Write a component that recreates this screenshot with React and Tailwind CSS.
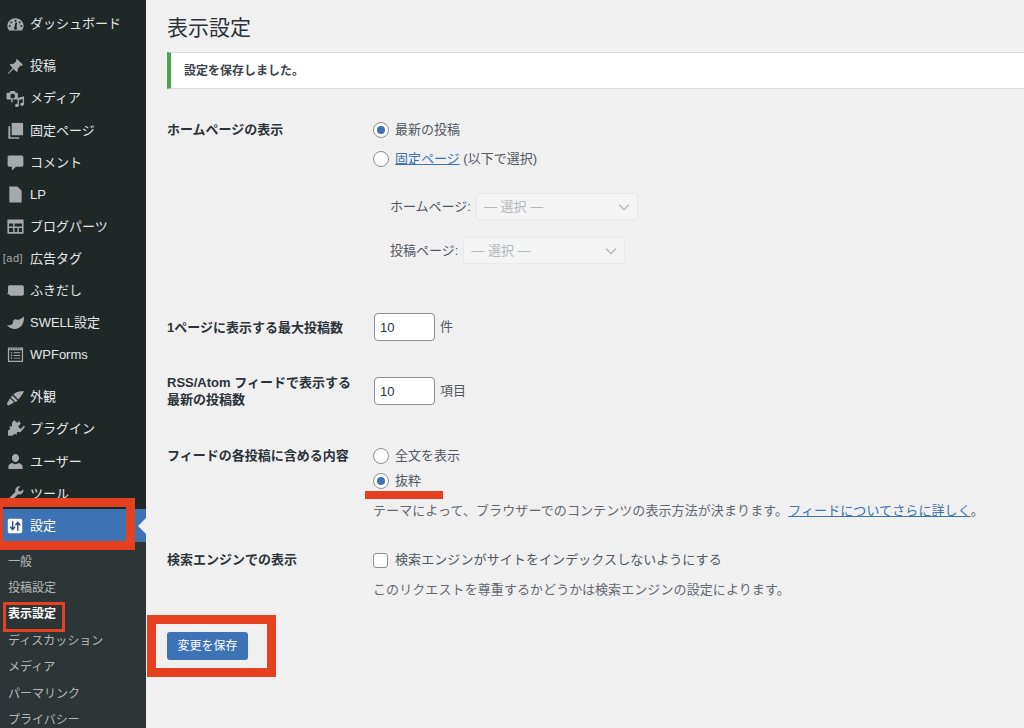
import React from 'react';

const gray = '#a7aaad';

// Menu icons, drawn on a 20x20 box like the admin's icon font
const icons = {
  dashboard: (
    <path fillRule="evenodd" d="M10 3.500C5.300 3.500 1.500 7 1.500 11.300c0 1.800.6 3.500 1.700 4.900h13.600c1.100-1.400 1.700-3.100 1.700-4.900C18.500 7 14.700 3.500 10 3.500zM10 5a1 1 0 110 2 1 1 0 010-2zM5.600 6.800a1 1 0 110 2 1 1 0 010-2zm8.800 0a1 1 0 110 2 1 1 0 010-2zM3.900 10.600a1 1 0 110 2 1 1 0 010-2zm12.200 0a1 1 0 110 2 1 1 0 010-2zM11.700 8l-.7 4.600a1.600 1.600 0 11-2 0L9.900 8h1.800z" />
  ),
  pin: (
    <path d="M11.600 2.200l6.200 6-1.300 1.200-1-.5-3.200 3.100c.5 1.500.2 3-.8 4.100L8 12.600l-5.600 5.200-.6-.5L7 11.600 3.700 8.200c1.100-1 2.700-1.300 4.100-.8l3.100-3.200-.5-1 1.200-1z" />
  ),
  media: (
    <path fillRule="evenodd" d="M1.500 4h2.300l1-1.800h4.400l1 1.800h1.300c.6 0 1 .4 1 1v5c0 .6-.4 1-1 1H7v3H5.500v-3h-4c-.6 0-1-.4-1-1V5c0-.6.4-1 1-1zM7 5a2.500 2.500 0 100 5 2.500 2.500 0 000-5zM19 7.500v8.300c0 1.100-1 2-2.100 2s-1.900-.7-1.900-1.700 1-1.700 2-1.700c.2 0 .4 0 .6.100V10.500l-4 1v5.600c0 1.100-1 1.900-2.100 1.900s-1.900-.7-1.900-1.700.9-1.700 2-1.700c.2 0 .4 0 .6.100V9.500L19 7.500z" />
  ),
  pages: (
    <>
      <path d="M6 2h12v13H6z" />
      <path d="M2.500 5.500H4.500V17H14v1.800H2.500z" />
    </>
  ),
  comment: (
    <path d="M3.500 2.500h13c1 0 1.800.8 1.800 1.800v8.400c0 1-.8 1.800-1.800 1.800h-6l-4.300 4v-4H3.500c-1 0-1.800-.8-1.800-1.800V4.300c0-1 .8-1.800 1.800-1.800z" />
  ),
  file: <path d="M3.500 1.500h8.500l4.500 4.500v12.500h-13z" />,
  table: (
    <path fillRule="evenodd" d="M1.500 2.500h17v15h-17v-15zm1.700 4.300v3.200h4.300V6.800H3.200zm5.800 0v3.200h7.800V6.800H9zm-5.800 4.700v4.300h4.300v-4.300H3.200zm5.800 0v4.300h3v-4.300H9zm4.500 0v4.300h3.300v-4.300h-3.300z" />
  ),
  bubble: (
    <path d="M3.500 4.500h13.500c1 0 1.800.8 1.800 1.800v7.400c0 1-.8 1.800-1.800 1.800H4.500l-1-1.400-2.400-.6 1-1.200V6.300c0-1 .8-1.800 1.400-1.800z" />
  ),
  swell: (
    <path d="M18.800 3.800c.6 5.500-1.600 11.500-7.600 12.800C7 17.500 3 15.700.8 12.400c2.200.9 4.200.7 5.400-.3.900-.8 1-2.100 1.100-3 .3-2 2.200-3 3.600-2.300 1.100.5 2.100.4 3.600-.3 1.700-.7 3.100-1.500 4.300-2.700z" />
  ),
  forms: (
    <path fillRule="evenodd" d="M2 2.500h16V18H2V2.500zm1.300 3v11.200h13.400V5.500H3.300zM4 3.400v1h1v-1H4zm2.500 0v1h1v-1h-1zm2.500 0v1h1v-1H9zm2.500 0v1h1v-1h-1zm2.500 0v1h1v-1h-1zM5 7.500h1.500V9H5V7.500zm3 .2h7v1H8v-1zm-3 2.600h1.500v1.500H5v-1.500zm3 .2h7v1H8v-1zm-3 2.600h1.500v1.500H5V13.100zm3 .2h7v1H8v-1z" />
  ),
  brush: (
    <path d="M19 3.500c-3.200-.3-6.700.2-9 1.500L7.800 6.800l5.200 5.200 1.800-2.100c1.300-1.500 3.300-4.300 4.200-6.400zM6.800 7.800l-1.900 1.900 5.300 5.300 1.900-1.900-5.300-5.300zM4.300 10.800L1.300 15.800c-.4.800-.2 1.500.3 2s1.300.6 2 .2l5-3-4.300-4.200z" />
  ),
  plug: (
    <path d="M14.200 2.400l1.500 1.200-3 3.600 2.900 2.400 3-3.600 1.400 1.200-3.500 4.300c-1.200 1.400-3 1.700-4.500.9l-.9 1 .7 1.800-3.100-.5-1.900 1.900H2.200l-.2-5 2.200-2.200-.5-3.100 1.800.8 1-1c-.7-1.500-.4-3.200.8-4.400l1.400-1.500 3 2.600 2.700-2.400z" />
  ),
  user: (
    <path d="M10 2.200c2.200 0 3.800 1.900 3.800 4.200S12.200 10.700 10 10.700 6.200 8.700 6.200 6.400 7.800 2.200 10 2.200zM2.500 17.800v-2.300c0-2 2.200-3.500 4.200-3.800 1 .8 2.100 1.200 3.300 1.200s2.300-.4 3.300-1.200c2 .3 4.200 1.800 4.200 3.800v2.300h-15z" />
  ),
  wrench: (
    <path d="M18.200 5.400c.4 1.500 0 3.200-1.200 4.300-1.200 1.200-3 1.600-4.500 1L5.900 17.700c-.8.800-2 .8-2.800 0s-.8-2 0-2.800L10 8.100c-.6-1.500-.2-3.300 1-4.500 1.200-1.100 2.800-1.500 4.300-1.200L12.700 5l.6 2.300 2.300.6 2.600-2.500z" />
  ),
};

function MenuIcon({ name }) {
  return (
    <svg viewBox="0 0 20 20" fill={gray} className="h-[19px] w-[19px] shrink-0">
      {icons[name]}
    </svg>
  );
}

function MenuRow({ icon, label, className = '' }) {
  return (
    <div className={`flex h-[32.1px] items-center text-[13px] text-[#e4e6e7] ${className}`}>
      <div className="flex w-[30px] shrink-0 justify-center">
        {icon === 'ad' ? (
          <span className="-ml-[4px] text-[11px] tracking-[0.5px] text-[#a7aaad]">[ad]</span>
        ) : (
          <MenuIcon name={icon} />
        )}
      </div>
      <span>{label}</span>
    </div>
  );
}

function SubRow({ label, active }) {
  return (
    <div
      className={`flex h-[26.4px] items-center pl-[8px] text-[12px] ${
        active ? 'font-bold text-white' : 'text-[#b4b8ba]'
      }`}
    >
      {label}
    </div>
  );
}

function Radio({ checked }) {
  return (
    <span className="flex h-[16px] w-[16px] shrink-0 items-center justify-center rounded-full border border-[#8c8f94] bg-white">
      {checked && <span className="h-[8px] w-[8px] rounded-full bg-[#3d72b4]" />}
    </span>
  );
}

function RadioRow({ checked, className = '', children }) {
  return (
    <div className={`flex h-[25px] items-center gap-[6px] text-[13px] text-[#50575e] ${className}`}>
      <Radio checked={checked} />
      <span>{children}</span>
    </div>
  );
}

function FakeSelect({ label, gap }) {
  return (
    <div className={`flex items-center pl-[17px] ${gap}`}>
      <span className="text-[13px] text-[#50575e]">{label}</span>
      <div className="flex h-[27px] w-[162px] items-center justify-between rounded-[3px] border border-[#e8e8e9] bg-[#f4f4f5] pl-[7px] pr-[6px] text-[13px] text-[#b5b8bb]">
        <span>— 選択 —</span>
        <svg viewBox="0 0 16 16" className="h-[14px] w-[14px]" fill="none" stroke="#b5b8bb" strokeWidth="1.6">
          <path d="M2.500 5.500L8 11l5.500-5.500" />
        </svg>
      </div>
    </div>
  );
}

function NumberRow({ label, unit, className = '' }) {
  return (
    <div className={`flex items-center ${className}`}>
      <div className="w-[207px] shrink-0 text-[13px] font-bold leading-[17px] text-[#2c3338]">{label}</div>
      <input
        readOnly
        value="10"
        className="h-[28px] w-[61px] rounded-[4px] border border-[#8c8f94] bg-white px-[5px] text-[13px] text-[#2c3338]"
      />
      <span className="ml-[5px] text-[13px] text-[#50575e]">{unit}</span>
    </div>
  );
}

export default function App() {
  return (
    <div className="relative flex h-[728px] w-[1024px] overflow-hidden bg-[#f0f0f1] font-['Liberation_Sans','Noto_Sans_CJK_JP',sans-serif]">
      {/* Sidebar */}
      <aside className="w-[146px] shrink-0 bg-[#1f2727] pt-[8px]">
        <MenuRow icon="dashboard" label="ダッシュボード" />
        <MenuRow icon="pin" label="投稿" className="mt-[10px]" />
        <MenuRow icon="media" label="メディア" />
        <MenuRow icon="pages" label="固定ページ" />
        <MenuRow icon="comment" label="コメント" />
        <MenuRow icon="file" label="LP" />
        <MenuRow icon="table" label="ブログパーツ" />
        <MenuRow icon="ad" label="広告タグ" />
        <MenuRow icon="bubble" label="ふきだし" />
        <MenuRow icon="swell" label="SWELL設定" />
        <MenuRow icon="forms" label="WPForms" />
        <MenuRow icon="brush" label="外観" className="mt-[10px]" />
        <MenuRow icon="plug" label="プラグイン" />
        <MenuRow icon="user" label="ユーザー" />
        <MenuRow icon="wrench" label="ツール" />

        <div className="relative flex h-[33px] items-center bg-[#3d72b4] text-[13px] text-white">
          <div className="flex w-[30px] justify-center">
            <svg viewBox="0 0 20 20" className="h-[16px] w-[16px]">
              <rect x="1" y="1" width="18" height="18" rx="2" fill="#ffffff" />
              <path d="M7 4v10M4 11l3 3.500L10 11M13.500 16V6M10.500 9l3-3.500 3 3.500" fill="none" stroke="#2a4f80" strokeWidth="1.800" />
            </svg>
          </div>
          <span>設定</span>
          <span className="absolute right-0 top-[9px] h-0 w-0 border-y-[8px] border-r-[8px] border-y-transparent border-r-[#f0f0f1]" />
        </div>

        <div className="h-full bg-[#2e3536] pt-[6px]">
          <SubRow label="一般" />
          <SubRow label="投稿設定" />
          <SubRow label="表示設定" active />
          <SubRow label="ディスカッション" />
          <SubRow label="メディア" />
          <SubRow label="パーマリンク" />
          <SubRow label="プライバシー" />
        </div>
      </aside>

      {/* Main column */}
      <main className="flex-1 pl-[21px] pt-[14px]">
        <h1 className="h-[28px] text-[21px] leading-[28px] text-[#2c3338]">表示設定</h1>

        <div className="mt-[10px] flex h-[37px] items-center border-y border-y-[#dcdcde] border-l-[4px] border-l-[#4aa34f] bg-white pl-[13px] text-[12px] font-bold text-[#3c434a]">
          設定を保存しました。
        </div>

        {/* ホームページの表示 */}
        <div className="mt-[28px] flex">
          <div className="w-[206px] shrink-0 text-[13px] font-bold leading-[26px] text-[#2c3338]">ホームページの表示</div>
          <div className="flex flex-col">
            <RadioRow checked className="h-[26px]">最新の投稿</RadioRow>
            <RadioRow className="mt-[3px] h-[26px]">
              <a href="#" className="text-[#3f74ae] underline">固定ページ</a> (以下で選択)
            </RadioRow>
            <div className="mt-[21px]">
              <FakeSelect label="ホームページ:" gap="gap-[5px]" />
            </div>
            <div className="mt-[17px]">
              <FakeSelect label="投稿ページ:" gap="gap-[5px]" />
            </div>
          </div>
        </div>

        <NumberRow label="1ページに表示する最大投稿数" unit="件" className="mt-[49px]" />
        <NumberRow
          label={
            <>
              RSS/Atom フィードで表示する
              <br />
              最新の投稿数
            </>
          }
          unit="項目"
          className="mt-[33px]"
        />

        {/* フィードの各投稿に含める内容 */}
        <div className="mt-[35px] flex">
          <div className="w-[206px] shrink-0 text-[13px] font-bold leading-[25px] text-[#2c3338]">フィードの各投稿に含める内容</div>
          <div>
            <RadioRow>全文を表示</RadioRow>
            <RadioRow checked>抜粋</RadioRow>
            <p className="mt-[8px] text-[13px] leading-[20px] tracking-[0.09px] text-[#646970]">
              テーマによって、ブラウザーでのコンテンツの表示方法が決まります。
              <a href="#" className="text-[#3f74ae] underline">フィードについてさらに詳しく</a>。
            </p>
          </div>
        </div>

        {/* 検索エンジンでの表示 */}
        <div className="mt-[26px] flex">
          <div className="w-[206px] shrink-0 text-[13px] font-bold leading-[26px] text-[#2c3338]">検索エンジンでの表示</div>
          <div>
            <div className="flex h-[26px] items-center gap-[7px] text-[13px] tracking-[0.09px] text-[#50575e]">
              <span className="h-[15px] w-[15px] rounded-[3px] border border-[#8c8f94] bg-white" />
              <span>検索エンジンがサイトをインデックスしないようにする</span>
            </div>
            <p className="mt-[7px] text-[13px] leading-[20px] tracking-[0.09px] text-[#646970]">このリクエストを尊重するかどうかは検索エンジンの設定によります。</p>
          </div>
        </div>

        <button className="mt-[32px] h-[28px] w-[81px] rounded-[3px] bg-[#3d72b4] text-[12px] text-white">変更を保存</button>
      </main>

      {/* Red annotations drawn over the screenshot */}
      <div className="absolute left-0 top-[498px] h-[52px] w-[135px] border-y-[9px] border-l-[3px] border-r-[9px] border-[#e5401f]" />
      <div className="absolute left-[3px] top-[602px] h-[30px] w-[62px] border-[3px] border-[#e5401f]" />
      <div className="absolute left-[147px] top-[615px] h-[62px] w-[129px] border-[9px] border-[#e5401f]" />
      <div className="absolute left-[365px] top-[491px] h-[8px] w-[78px] bg-[#e5401f]" />
    </div>
  );
}
